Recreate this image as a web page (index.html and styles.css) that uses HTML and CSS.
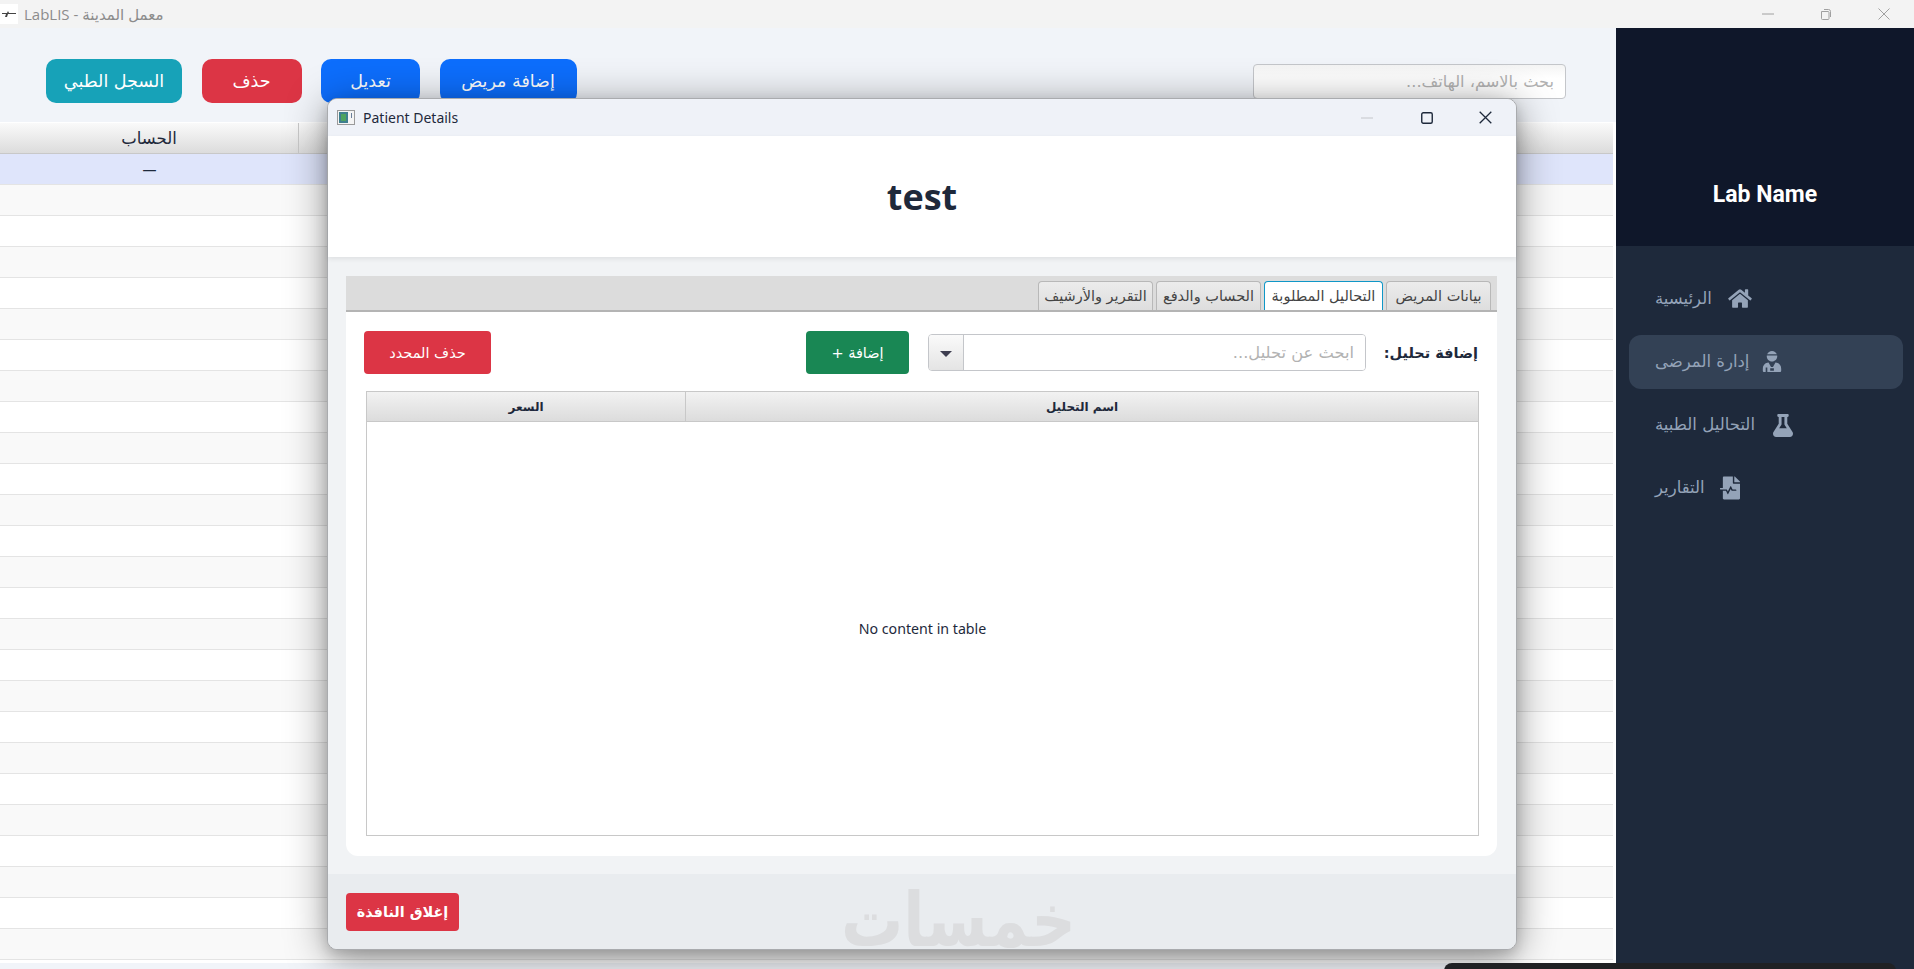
FILE: index.html
```html
<!DOCTYPE html>
<html lang="ar">
<head>
<meta charset="utf-8">
<title>LabLIS</title>
<link rel="stylesheet" href="styles.css">
</head>
<body>
<div class="app">
  <header class="titlebar">
    <div class="app-title">
      <span class="app-icon"><svg width="14" height="8" viewBox="0 0 14 8"><path d="M0 3h5l1-2 1 2h7v1H6L5 7H3l1-3H0z" fill="#444"/></svg></span>
      <span class="app-name" dir="rtl">معمل المدينة - LabLIS</span>
    </div>
    <div class="win-controls">
      <svg class="win-btn" width="12" height="12" viewBox="0 0 12 12"><path d="M0 6h12" stroke="#a0a0a0" fill="none"/></svg>
      <svg class="win-btn" width="12" height="12" viewBox="0 0 12 12"><path d="M1.5 3.5h6.500a1 1 0 0 1 1 1v6a1 1 0 0 1-1 1h-5.500a1 1 0 0 1-1-1zM4 1.500h4.500a2 2 0 0 1 2 2v5.500" stroke="#a0a0a0" fill="none"/></svg>
      <svg class="win-btn" width="12" height="12" viewBox="0 0 12 12"><path d="M.5.500l11 11M11.500.500l-11 11" stroke="#a0a0a0" fill="none"/></svg>
    </div>
  </header>

  <div class="workspace">
    <main class="content">
      <div class="toolbar">
        <div class="actions" dir="rtl">
          <button class="btn btn-blue btn-add">إضافة مريض</button>
          <button class="btn btn-blue btn-edit">تعديل</button>
          <button class="btn btn-red btn-del">حذف</button>
          <button class="btn btn-teal btn-rec">السجل الطبي</button>
        </div>
        <input class="search" dir="rtl" placeholder="بحث بالاسم، الهاتف...">
      </div>
      <div class="grid">
        <div class="grid-head">
          <div class="grid-col-account" dir="rtl">الحساب</div>
          <div class="grid-col-rest"></div>
        </div>
        <div class="row row-selected"><div class="grid-col-account">—</div></div>
        <div class="row row-alt"></div><div class="row"></div>
        <div class="row row-alt"></div><div class="row"></div>
        <div class="row row-alt"></div><div class="row"></div>
        <div class="row row-alt"></div><div class="row"></div>
        <div class="row row-alt"></div><div class="row"></div>
        <div class="row row-alt"></div><div class="row"></div>
        <div class="row row-alt"></div><div class="row"></div>
        <div class="row row-alt"></div><div class="row"></div>
        <div class="row row-alt"></div><div class="row"></div>
        <div class="row row-alt"></div><div class="row"></div>
        <div class="row row-alt"></div><div class="row"></div>
        <div class="row row-alt"></div><div class="row"></div>
        <div class="row row-alt"></div>
      </div>
    </main>

    <aside class="sidebar">
      <div class="brand">Lab Name</div>
      <nav class="nav">
        <a class="nav-item"><span class="nav-text">الرئيسية</span>
          <svg class="nav-icon icon-home" viewBox="0 0 576 512"><path d="M280.370 148.260L96 300.110V464a16 16 0 0 0 16 16l112.060-.29a16 16 0 0 0 15.920-16V368a16 16 0 0 1 16-16h64a16 16 0 0 1 16 16v95.640a16 16 0 0 0 16 16.050L464 480a16 16 0 0 0 16-16V300L295.670 148.260a12.190 12.190 0 0 0-15.300 0zM571.600 251.470L488 182.560V44.050a12 12 0 0 0-12-12h-56a12 12 0 0 0-12 12v72.610L318.470 43a48 48 0 0 0-61 0L4.340 251.470a12 12 0 0 0-1.600 16.900l25.500 31A12 12 0 0 0 45.150 301l235.220-193.740a12.190 12.190 0 0 1 15.300 0L530.900 301a12 12 0 0 0 16.900-1.600l25.500-31a12 12 0 0 0-1.700-16.930z"/></svg></a>
        <a class="nav-item nav-active"><span class="nav-text">إدارة المرضى</span>
          <svg class="nav-icon icon-user" viewBox="0 0 448 512"><path d="M106 80C125 33 170 0 224 0s99 33 118 80zM98 112h252c1 5 2 11 2 16 0 71-57 128-128 128S96 199 96 128c0-5 1-11 2-16z"/><path fill-rule="evenodd" d="M70 300c25-15 50-20 70-22l60 110h48l60-110c20 2 45 7 70 22 40 25 70 70 70 130v50c0 18-14 32-32 32H32c-18 0-32-14-32-32v-50c0-60 30-105 70-130zM70 400v112h40V400zM180 420v60h90v-60z"/></svg></a>
        <a class="nav-item"><span class="nav-text">التحاليل الطبية</span>
          <svg class="nav-icon icon-flask" viewBox="0 0 448 512"><path d="M437.200 403.500L320 215V64h8c13.300 0 24-10.700 24-24V24c0-13.300-10.700-24-24-24H120c-13.300 0-24 10.700-24 24v16c0 13.300 10.700 24 24 24h8v151L10.800 403.500C-18.500 450.600 15.300 512 70.900 512h306.200c55.700 0 89.400-61.500 60.100-108.500zM137.900 320l48.200-77.600c3.700-5.200 5.800-11.600 5.800-18.400V64h64v160c0 6.900 2.200 13.200 5.800 18.400l48.200 77.600h-172z"/></svg></a>
        <a class="nav-item"><span class="nav-text">التقارير</span>
          <svg class="nav-icon icon-file" viewBox="0 0 448 512"><path d="M288 136V0H88C74.700 0 64 10.700 64 24v232H8c-4.400 0-8 3.600-8 8v16c0 4.400 3.600 8 8 8h140.900c3 0 5.800 1.700 7.200 4.400l19.900 39.800 56.800-113.700c2.900-5.900 11.400-5.900 14.300 0l34.700 69.500H352c8.800 0 16 7.200 16 16s-7.200 16-16 16h-89.900L240 275.800l-56.800 113.700c-2.900 5.900-11.400 5.900-14.300 0L134.100 320H64v168c0 13.300 10.700 24 24 24h336c13.300 0 24-10.700 24-24V160H312c-13.200 0-24-10.800-24-24zm153-31L343.100 7c-4.500-4.500-10.600-7-17-7H320v128h128v-6.100c0-6.300-2.500-12.400-7-16.900z"/></svg></a>
      </nav>
    </aside>
  </div>

  <section class="modal">
    <div class="modal-bar">
      <div class="modal-name">
        <svg width="18" height="15" viewBox="0 0 18 15"><rect x=".5" y=".5" width="17" height="14" fill="#f4f4f4" stroke="#9a9a9a"/><rect x="2" y="2" width="9" height="11" fill="#3f7f8f"/><rect x="4" y="4" width="5" height="7" fill="#4da35f"/><rect x="14" y="3" width="1" height="5" fill="#6a7f9a"/></svg>
        <span>Patient Details</span>
      </div>
      <div class="modal-controls">
        <svg class="modal-min" width="12" height="12" viewBox="0 0 12 12"><path d="M0 6h12" stroke="#c4c6ca" fill="none"/></svg>
        <svg width="12" height="12" viewBox="0 0 12 12"><rect x=".75" y=".75" width="10.500" height="10.500" rx="1.500" stroke="#1e293b" stroke-width="1.400" fill="none"/></svg>
        <svg width="13" height="13" viewBox="0 0 13 13"><path d="M.7.700l11.600 11.600M12.300.700L.7 12.300" stroke="#1e293b" stroke-width="1.300" fill="none"/></svg>
      </div>
    </div>
    <div class="modal-head"><h1>test</h1></div>
    <div class="modal-body">
      <div class="tabs" dir="rtl">
        <div class="tab-bar">
          <div class="tab tab-1">بيانات المريض</div>
          <div class="tab tab-2 tab-current">التحاليل المطلوبة</div>
          <div class="tab tab-3">الحساب والدفع</div>
          <div class="tab tab-4">التقرير والأرشيف</div>
        </div>
        <div class="tab-page">
          <div class="add-row">
            <label class="add-label">إضافة تحليل:</label>
            <div class="combo" dir="ltr">
              <span class="combo-arrow"></span>
              <input class="combo-input" dir="rtl" placeholder="ابحث عن تحليل...">
            </div>
            <button class="btn-small btn-green">إضافة +</button>
            <button class="btn-small btn-small-red">حذف المحدد</button>
          </div>
          <div class="tests" dir="ltr">
            <div class="tests-head">
              <div class="tests-price" dir="rtl">السعر</div>
              <div class="tests-name" dir="rtl">اسم التحليل</div>
            </div>
            <div class="tests-empty">No content in table</div>
          </div>
        </div>
      </div>
    </div>
    <div class="modal-foot">
      <button class="btn-close" dir="rtl">إغلاق النافذة</button>
      <span class="watermark" dir="rtl">خمسات</span>
    </div>
  </section>

  <div class="dock"></div>
</div>
</body>
</html>
```
FILE: styles.css
```css
* { box-sizing: border-box; }
html, body { margin: 0; height: 100%; overflow: hidden; }
body { font-family: "Noto Sans", "DejaVu Sans", sans-serif; color: #1e293b; background: #f1f4f9; }
button, input { font-family: "DejaVu Sans", sans-serif; }

.app { position: relative; width: 1914px; height: 969px; display: flex; flex-direction: column; overflow: hidden; }

.titlebar { height: 28px; flex: none; display: flex; justify-content: space-between; background: #f3f3f3; }
.app-title { display: flex; align-items: center; gap: 6px; }
.app-icon { width: 18px; height: 20px; background: #fff; display: flex; align-items: center; justify-content: center; }
.app-name { font-family: "Open Sans", "DejaVu Sans", sans-serif; font-size: 15px; color: #8c8c8c; }
.win-controls { display: flex; align-items: center; gap: 46px; padding-right: 24px; }

.workspace { flex: 1; min-height: 0; display: flex; }
.content { flex: 1; min-width: 0; display: flex; flex-direction: column; background: #f1f4f9; }
.toolbar { display: flex; justify-content: space-between; align-items: center; padding: 31px 50px 0 46px; }
.actions { display: flex; gap: 19.500px; }
.btn { height: 44px; border: 0; border-radius: 10px; color: #fff; font-size: 17.500px; padding: 0; }
.btn-add { width: 137px; }
.btn-edit { width: 99px; }
.btn-del { width: 100px; }
.btn-rec { width: 136px; }
.btn-blue { background: #0d6efd; }
.btn-red { background: #dc3545; }
.btn-teal { background: #17a2b8; }
.search { width: 313px; height: 35px; border: 1px solid #c4c6ca; border-radius: 4px; padding: 0 11px; font-size: 16.200px; background: linear-gradient(#f4f4f4, #fff 40%); outline: 0; }
.search::placeholder, .combo-input::placeholder { color: #b2b2b2; }

.grid { flex: 1; margin: 19px 0 6px; background: #fff; padding-right: 3px; overflow: hidden; }
.grid-head { height: 32px; display: flex; background: linear-gradient(#fafafa, #dcdcdc); border-bottom: 1px solid #c8c8c8; border-top: 1px solid #fff; font-size: 16.500px; font-family: "DejaVu Sans", sans-serif; }
.grid-col-account { width: 299px; height: 100%; display: flex; align-items: center; justify-content: center; }
.grid-head .grid-col-account { border-right: 1px solid #c8c8c8; padding-top: 1px; }
.grid-col-rest { flex: 1; }
.row { height: 31px; background: #fff; border-bottom: 1px solid #e4e4e4; font-size: 14px; }
.row-alt { background: #f9f9f9; }
.row-selected { background: #dfe5fb; }

.sidebar { width: 298px; flex: none; background: #1e293b; }
.brand { height: 218px; background: #0f172a; padding-top: 152px; text-align: center; color: #fff; font: 700 23px/30px Roboto, sans-serif; }
.nav { padding: 25.500px 11px 0 13px; display: flex; flex-direction: column; gap: 9.300px; }
.nav-item { height: 54px; border-radius: 12px; display: flex; align-items: center; gap: 15px; padding-left: 26px; color: #94a3b8; }
.nav-active { background: #334155; }
.nav-text { font-family: "DejaVu Sans", sans-serif; font-size: 16.500px; line-height: 20px; }
.nav-icon { height: 21px; fill: #94a3b8; flex: none; }
.icon-home { width: 26px; }
.icon-user { width: 20px; margin-left: -2px; }
.icon-flask { width: 20px; height: 23px; margin-left: 3px; }
.icon-file { width: 20px; height: 24px; }

.modal { position: absolute; left: 327px; top: 98px; width: 1190px; height: 852px; display: flex; flex-direction: column; border: 1px solid #a9abae; border-radius: 10px; background: #f1f3f5; box-shadow: 0 6px 42px rgba(0, 0, 0, .42), 0 6px 14px rgba(0, 0, 0, .16); }
.modal-bar { height: 37px; flex: none; display: flex; justify-content: space-between; align-items: center; padding: 0 24px 0 9px; background: #eff2f8; border-radius: 9px 9px 0 0; }
.modal-name { display: flex; align-items: center; gap: 8px; font-size: 14px; color: #1e293b; }
.modal-controls { display: flex; align-items: center; gap: 46px; }
.modal-min { margin-right: 2px; }
.modal-head { height: 121px; flex: none; background: #fff; display: flex; align-items: center; justify-content: center; box-shadow: 0 2px 5px rgba(0, 0, 0, .08); position: relative; }
.modal-head h1 { margin: 0; font: 700 36px/44px "Open Sans", sans-serif; color: #1e293b; }
.modal-body { flex: 1; min-height: 0; padding: 19px 19px 18px 18px; }
.tabs { height: 100%; display: flex; flex-direction: column; }
.tab-bar { height: 36px; flex: none; display: flex; gap: 3px; align-items: flex-end; padding-right: 6px; background: #dcdcdc; border-bottom: 2px solid #b4b4b4; }
.tab { height: 29px; border: 1px solid #b8b8b8; border-bottom: 0; border-radius: 4px 4px 0 0; background: linear-gradient(#ececec, #dedede); font: 14.500px/29px "DejaVu Sans", sans-serif; text-align: center; white-space: nowrap; color: #444; }
.tab-1 { width: 105px; }
.tab-2 { width: 119px; }
.tab-3 { width: 105px; }
.tab-4 { width: 115px; }
.tab-current { background: #fff; border-color: #0f97c7; }
.tab-page { flex: 1; min-height: 0; display: flex; flex-direction: column; padding: 19px 18px 20px; background: #fff; border-radius: 0 0 12px 12px; }
.add-row { display: flex; align-items: center; height: 43px; }
.add-label { width: 113px; padding-right: 1px; font: 700 14.500px "DejaVu Sans", sans-serif; color: #1e293b; }
.combo { width: 438px; height: 37px; display: flex; border: 1px solid #c4c6ca; border-radius: 4px; overflow: hidden; }
.combo-arrow { width: 35px; flex: none; background: linear-gradient(#fafafa, #e4e4e4); border-right: 1px solid #c4c6ca; position: relative; }
.combo-arrow::after { content: ""; position: absolute; left: 11px; top: 16px; border: 6px solid transparent; border-top: 6px solid #3e3e50; border-bottom: 0; }
.combo-input { flex: 1; min-width: 0; border: 0; padding: 0 11px; font-size: 16.300px; outline: 0; }
.btn-small { height: 43px; border: 0; border-radius: 4px; color: #fff; font-size: 14.500px; padding: 0; }
.btn-green { width: 103px; margin-right: 19px; background: #198754; }
.btn-small-red { width: 127px; margin-right: auto; background: #dc3545; }
.tests { flex: 1; min-height: 0; margin: 17px 0 0 2px; display: flex; flex-direction: column; border: 1px solid #c8c8c8; }
.tests-head { height: 30px; flex: none; display: flex; background: linear-gradient(#f2f2f2, #dcdcdc); border-bottom: 1px solid #c8c8c8; font: 700 12px "DejaVu Sans", sans-serif; }
.tests-price { width: 319px; display: flex; align-items: center; justify-content: center; border-right: 1px solid #c8c8c8; }
.tests-name { flex: 1; display: flex; align-items: center; justify-content: center; }
.tests-empty { flex: 1; display: flex; align-items: center; justify-content: center; font-size: 14.200px; color: #1e293b; }
.modal-foot { position: relative; height: 75px; flex: none; padding: 19px 18px; background: #e9ecef; border-radius: 0 0 9px 9px; }
.btn-close { width: 113px; height: 38px; border: 0; border-radius: 4px; background: #dc3545; color: #fff; font-size: 14.400px; font-weight: 700; padding: 0; }
.watermark { position: absolute; left: 513px; bottom: -9px; font: 700 62px/62px "DejaVu Sans", sans-serif; color: #dcdddf; transform: scaleY(1.2); transform-origin: 50% 100%; }
.dock { position: absolute; left: 1444px; top: 963px; width: 452px; height: 12px; border-radius: 8px 8px 0 0; background: #202124; }
```
